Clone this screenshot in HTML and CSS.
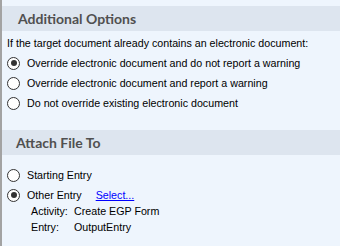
FILE: index.html
```html
<!DOCTYPE html>
<html lang="en">
<head>
    <meta charset="UTF-8">
    <title>Attachment Options</title>
    <link rel="stylesheet" href="styles.css">
</head>
<body>
    <div class="panel">
        <div class="band">Additional Options</div>
        <div class="intro">If the target document already contains an electronic document:</div>
        <div class="option"><span class="radio checked"></span>Override electronic document and do not report a warning</div>
        <div class="option"><span class="radio"></span>Override electronic document and report a warning</div>
        <div class="option"><span class="radio"></span>Do not override existing electronic document</div>

        <div class="band band-second">Attach File To</div>
        <div class="option option-first"><span class="radio"></span>Starting Entry</div>
        <div class="option"><span class="radio checked"></span>Other Entry<a class="select-link" href="#">Select...</a></div>
        <div class="detail"><span class="detail-label">Activity:</span>Create EGP Form</div>
        <div class="detail"><span class="detail-label">Entry:</span>OutputEntry</div>
    </div>
</body>
</html>
```

FILE: styles.css
```css
html, body {
    margin: 0;
    height: 100%;
}
body {
    font-family: 'Liberation Sans', Arial, sans-serif;
    font-size: 10.7px;
    color: #000;
    background-color: #eef5fd;
}
.panel {
    height: 100%;
    box-sizing: border-box;
    border-left: 2px solid #a3a3a3;
    padding-top: 6px;
}
.band {
    height: 25px;
    line-height: 25px;
    padding-left: 16px;
    background-color: #dde5ef;
    color: #505050;
    font-family: Lato, 'Liberation Sans', sans-serif;
    font-weight: bold;
    font-size: 14px;
}
.band-second {
    margin-top: 17px;
    padding-left: 14px;
}
.intro {
    height: 14px;
    line-height: 14px;
    margin-top: 5px;
    padding-left: 5px;
}
.option {
    display: flex;
    align-items: center;
    height: 20px;
    padding-left: 5px;
}
.option:nth-child(3) {
    margin-top: 3px;
}
.option-first {
    margin-top: 10px;
}
.radio {
    width: 11px;
    height: 11px;
    border: 1px solid #333;
    border-radius: 50%;
    background-color: #fff;
    margin-right: 7px;
    position: relative;
    flex: none;
}
.radio.checked::after {
    content: '';
    position: absolute;
    left: 2.5px;
    top: 2.5px;
    width: 6px;
    height: 6px;
    border-radius: 50%;
    background-color: #333;
}
.select-link {
    margin-left: 14px;
    color: #0000ff;
}
.detail {
    height: 16px;
    line-height: 16px;
    padding-left: 29px;
}
.detail:nth-last-child(2) {
    margin-top: -2px;
}
.detail-label {
    display: inline-block;
    width: 43px;
}
```
